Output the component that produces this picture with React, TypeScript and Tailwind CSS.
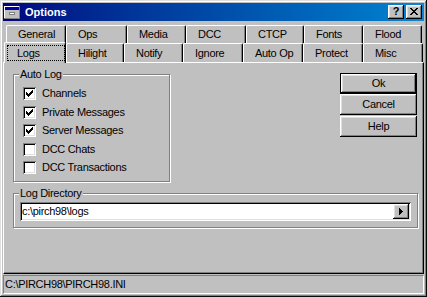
import React from "react";

const raised =
  "shadow-[inset_-1px_-1px_#000,inset_1px_1px_#fff,inset_-2px_-2px_#808080,inset_2px_2px_#dfdfdf]";
const sunken =
  "shadow-[inset_1px_1px_#808080,inset_-1px_-1px_#fff,inset_2px_2px_#000,inset_-2px_-2px_#dfdfdf]";

const topTabs = [
  { label: "General", w: "w-[60px]" },
  { label: "Ops", w: "w-[61px]" },
  { label: "Media", w: "w-[59px]" },
  { label: "DCC", w: "w-[60px]" },
  { label: "CTCP", w: "w-[58px]" },
  { label: "Fonts", w: "w-[59px]" },
  { label: "Flood", w: "w-[59px]" },
];

const bottomTabs = [
  { label: "Hilight", w: "w-[58px]" },
  { label: "Notify", w: "w-[59px]" },
  { label: "Ignore", w: "w-[60px]" },
  { label: "Auto Op", w: "w-[60px]" },
  { label: "Protect", w: "w-[60px]" },
  { label: "Misc", w: "w-[60px]" },
];

const logItems = [
  { label: "Channels", checked: true },
  { label: "Private Messages", checked: true },
  { label: "Server Messages", checked: true },
  { label: "DCC Chats", checked: false },
  { label: "DCC Transactions", checked: false },
];

function Tab({ label, w }: { label: string; w: string }) {
  return (
    <div
      className={`flex h-full items-center rounded-t-[2px] border-t border-r border-l border-white border-r-black pl-[11px] shadow-[inset_-1px_0_#808080] ${w}`}
    >
      {label}
    </div>
  );
}

function Check({ label, checked }: { label: string; checked: boolean }) {
  return (
    <div className="flex h-[13px] items-center gap-[6px]">
      <span className={`flex h-[13px] w-[13px] items-center justify-center bg-white ${sunken}`}>
        {checked && (
          <svg width="7" height="7" viewBox="0 0 7 7" shapeRendering="crispEdges">
            <path
              d="M0 2h1v3H0z M1 3h1v3H1z M2 4h1v3H2z M3 3h1v3H3z M4 2h1v3H4z M5 1h1v3H5z M6 0h1v3H6z"
              fill="#000"
            />
          </svg>
        )}
      </span>
      <span>{label}</span>
    </div>
  );
}

function Group({
  label,
  className,
  children,
}: {
  label: string;
  className: string;
  children: React.ReactNode;
}) {
  return (
    <div
      className={`relative border border-[#808080] shadow-[inset_1px_1px_#fff,1px_1px_#fff] ${className}`}
    >
      <span className="absolute -top-[7px] left-[5px] bg-[#c0c0c0] px-[1px] leading-[13px]">
        {label}
      </span>
      {children}
    </div>
  );
}

function Btn({ label, isDefault }: { label: string; isDefault?: boolean }) {
  if (isDefault) {
    return (
      <div className="h-[21px] w-[77px] border border-black">
        <button type="button" className={`flex h-full w-full items-center justify-center ${raised}`}>
          {label}
        </button>
      </div>
    );
  }
  return (
    <button type="button" className={`flex h-[21px] w-[77px] items-center justify-center ${raised}`}>
      {label}
    </button>
  );
}

export default function App() {
  return (
    <div
      className={`flex h-[297px] w-[427px] flex-col bg-[#c0c0c0] p-[3px] font-['Liberation_Sans',Arial,sans-serif] text-[11px] leading-[13px] tracking-[-0.3px] text-black shadow-[inset_-1px_-1px_#0a0a0a,inset_1px_1px_#dfdfdf,inset_-2px_-2px_#808080,inset_2px_2px_#fff]`}
    >
      {/* title bar */}
      <div className="flex h-[18px] items-center bg-linear-to-r from-[#000080] to-[#1084d0] pr-[2px] pl-[1px]">
        <svg width="16" height="13" viewBox="0 0 16 13" shapeRendering="crispEdges">
          <rect x="0" y="0" width="16" height="13" fill="#808080" />
          <rect x="0" y="0" width="15" height="12" fill="#fff" />
          <rect x="1" y="1" width="14" height="11" fill="#c0c0c0" />
          <rect x="1" y="1" width="14" height="3" fill="#0000a8" />
          <rect x="5" y="6" width="6" height="3" fill="#808080" />
          <rect x="6" y="7" width="4" height="1" fill="#fff" />
        </svg>
        <span className="ml-[5px] font-bold tracking-normal text-white">Options</span>
        <div className="ml-auto flex gap-[1px]">
          <button
            type="button"
            className={`flex h-[14px] w-[16px] items-center justify-center bg-[#c0c0c0] pb-[1px] text-[11px] leading-none font-bold tracking-normal ${raised}`}
          >
            ?
          </button>
          <button
            type="button"
            className={`ml-[1px] flex h-[14px] w-[16px] items-center justify-center bg-[#c0c0c0] pb-[1px] ${raised}`}
          >
            <svg width="8" height="7" viewBox="0 0 8 7" shapeRendering="crispEdges">
              <path
                d="M0 0h2v1H0z M6 0h2v1H6z M1 1h2v1H1z M5 1h2v1H5z M2 2h4v1H2z M3 3h2v1H3z M2 4h4v1H2z M1 5h2v1H1z M5 5h2v1H5z M0 6h2v1H0z M6 6h2v1H6z"
                fill="#000"
              />
            </svg>
          </button>
        </div>
      </div>

      {/* tab rows */}
      <div className="mt-[4px] flex h-[18px] pl-[3px]">
        {topTabs.map((t) => (
          <Tab key={t.label} label={t.label} w={t.w} />
        ))}
      </div>
      <div className="flex h-[19px] pl-[1px]">
        <div className="relative z-10 -mt-[1px] h-[21px] w-[62px] rounded-t-[2px] border-t border-r border-l border-white border-r-black bg-[#c0c0c0] shadow-[inset_-1px_0_#808080]">
          <div className="mt-[2px] ml-[2px] flex h-[16px] w-[58px] items-center border border-dotted border-black pl-[9px]">
            Logs
          </div>
        </div>
        {bottomTabs.map((t) => (
          <Tab key={t.label} label={t.label} w={t.w} />
        ))}
      </div>

      {/* page */}
      <div className="flex h-[212px] flex-col border border-white border-r-black border-b-black shadow-[inset_-1px_-1px_#808080]">
        <div className="flex">
          <Group label="Auto Log" className="mt-[11px] ml-[9px] h-[108px] w-[157px] pt-[12px] pl-[9px]">
            <div className="flex flex-col gap-[5.5px]">
              {logItems.map((i) => (
                <Check key={i.label} label={i.label} checked={i.checked} />
              ))}
            </div>
          </Group>
          <div className="mt-[10px] mr-[6px] ml-auto flex flex-col">
            <Btn label="Ok" isDefault />
            <Btn label="Cancel" />
            <div className="mt-[1px]">
              <Btn label="Help" />
            </div>
          </div>
        </div>
        <Group label="Log Directory" className="mt-[11px] ml-[9px] h-[35px] w-[405px] pt-[8px] pl-[6px]">
          <div className={`flex h-[19px] w-[391px] bg-white p-[2px] ${sunken}`}>
            <span className="flex-1 leading-[15px]">{"c:\\pirch98\\logs"}</span>
            <span className={`flex w-[16px] items-center justify-center bg-[#c0c0c0] ${raised}`}>
              <svg width="4" height="7" viewBox="0 0 4 7" shapeRendering="crispEdges">
                <path d="M0 0h1v7H0z M1 1h1v5H1z M2 2h1v3H2z M3 3h1v1H3z" fill="#000" />
              </svg>
            </span>
          </div>
        </Group>
      </div>

      {/* status bar */}
      <div className="mt-[1px] flex h-[19px] items-center border border-[#808080] border-r-white border-b-white pl-[1px]">
        {"C:\\PIRCH98\\PIRCH98.INI"}
      </div>
    </div>
  );
}
